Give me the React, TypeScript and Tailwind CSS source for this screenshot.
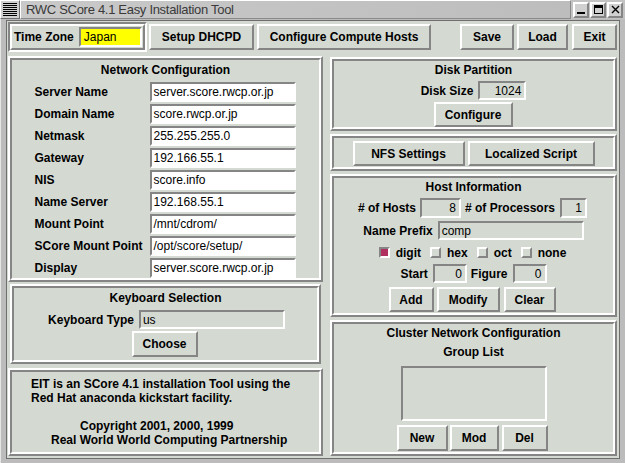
import React from 'react';

// Tk / Motif style bevels
const raised = 'border-2 border-t-white border-l-white border-r-[#858585] border-b-[#858585]';
const sunken = 'border-2 border-t-[#858585] border-l-[#858585] border-r-white border-b-white';

function Ridge({ className = '', inner = '', children }: { className?: string; inner?: string; children?: React.ReactNode }) {
  return (
    <div className={`${raised} ${className}`}>
      <div className={`h-full ${sunken} ${inner}`}>{children}</div>
    </div>
  );
}

function Btn({ className = '', children }: { className?: string; children: React.ReactNode }) {
  return (
    <button
      type="button"
      className={`${raised} bg-[#d4d9d2] flex items-center justify-center font-bold text-[12px] leading-none text-black shrink-0 ${className}`}
    >
      {children}
    </button>
  );
}

function Entry({ value, className = '', white = true, right = false }: { value: string; className?: string; white?: boolean; right?: boolean }) {
  return (
    <div
      className={`${sunken} ${white ? 'bg-white' : 'bg-[#d4d9d2]'} flex items-center px-[1px] text-[12px] leading-none text-black shrink-0 overflow-hidden ${right ? 'justify-end pr-[3px]' : ''} ${className}`}
    >
      {value}
    </div>
  );
}

function Check({ on, label }: { on?: boolean; label: string }) {
  return (
    <div className="flex items-center gap-[6px]">
      <div className={`w-[11px] h-[11px] ${on ? `${sunken} bg-[#b03060]` : `${raised} bg-[#d4d9d2]`}`} />
      <span className="font-bold text-[12px] leading-[14px]">{label}</span>
    </div>
  );
}

const networkRows = [
  ['Server Name', 'server.score.rwcp.or.jp'],
  ['Domain Name', 'score.rwcp.or.jp'],
  ['Netmask', '255.255.255.0'],
  ['Gateway', '192.166.55.1'],
  ['NIS', 'score.info'],
  ['Name Server', '192.168.55.1'],
  ['Mount Point', '/mnt/cdrom/'],
  ['SCore Mount Point', '/opt/score/setup/'],
  ['Display', 'server.score.rwcp.or.jp'],
];

function TitleBar() {
  return (
    <div className="h-[19px] flex bg-[#c3c3c3]">
      <div className={`w-[20px] h-[19px] border border-t-white border-l-white border-r-[#6e6e6e] border-b-[#6e6e6e] bg-[#d0d0d0] flex items-center justify-center`}>
        <svg width="14" height="13" viewBox="0 0 14 13">
          {[0, 2, 4, 6, 8, 10, 12].map((y) => (
            <rect key={y} x="0" y={y} width="14" height="1" fill="#000" />
          ))}
        </svg>
      </div>
      <div className="flex-1 border border-t-white border-l-white border-r-[#8a8a8a] border-b-[#8a8a8a] bg-gradient-to-r from-[#c9c9c9] to-[#bdbdbd] pl-[5px] text-[13px] leading-[17px] tracking-[-0.3px] text-[#3a3a3a]">
        RWC SCore 4.1 Easy Installation Tool
      </div>
      <div className="flex items-center gap-[1px] px-[2px] bg-[#c3c3c3]">
        <div className={`w-[16px] h-[16px] ${raised} bg-[#d0d0d0] flex items-end justify-center pb-[2px]`}>
          <div className="w-[8px] h-[2px] bg-black" />
        </div>
        <div className={`w-[16px] h-[16px] ${raised} bg-[#d0d0d0] flex items-center justify-center`}>
          <div className="w-[9px] h-[9px] border border-t-[3px] border-black" />
        </div>
        <div className={`w-[16px] h-[16px] ${raised} bg-[#d0d0d0] flex items-center justify-center`}>
          <svg width="9" height="9" viewBox="0 0 9 9">
            <path d="M1 1 L8 8 M8 1 L1 8" stroke="#000" strokeWidth="1.4" />
          </svg>
        </div>
      </div>
    </div>
  );
}

export default function App() {
  return (
    <div className="w-[625px] h-[463px] overflow-hidden bg-[#bcbcbc] flex flex-col font-['Liberation_Sans',Arial,sans-serif] text-black select-none">
      <TitleBar />
      <div className="flex-1 border-l border-l-[#e6e6e6] px-[5px] pt-[1px] pb-[4px] flex">
        <div className="flex-1 border border-[#6e6e6e] bg-[#d4d9d2] flex flex-col px-[1px] pt-[1px]">
          {/* toolbar */}
          <div className="flex items-center h-[30px]">
            <div className="w-[139px] h-[30px] border-2 border-t-[#858585] border-l-[#858585] border-r-white border-b-white shrink-0">
              <div className={`h-full ${raised} flex items-center pl-[2px] gap-[5px]`}>
                <span className="font-bold text-[12px]">Time Zone</span>
                <Entry value="Japan" className="w-[63px] h-[20px] !bg-[#ffff00] pl-[3px]" />
              </div>
            </div>
            <Btn className="w-[105px] h-[26px] ml-[2px]">Setup DHCPD</Btn>
            <Btn className="w-[174px] h-[26px] ml-[3px]">Configure Compute Hosts</Btn>
            <div className="flex-1" />
            <Btn className="w-[54px] h-[26px]">Save</Btn>
            <Btn className="w-[51px] h-[26px] ml-[3px]">Load</Btn>
            <Btn className="w-[45px] h-[26px] ml-[4px] mr-[1px]">Exit</Btn>
          </div>

          <div className="flex mt-[4px] gap-[7px] pr-[1px]">
            {/* left column */}
            <div className="w-[315px] flex flex-col">
              <Ridge className="h-[226px]" inner="pt-[3px] flex flex-col items-center">
                <div className="font-bold text-[12px] leading-[14px]">Network Configuration</div>
                <div className="mt-[5px] grid grid-cols-[115px_146px] gap-y-[2px] -ml-[1px]">
                  {networkRows.map(([label, value]) => (
                    <React.Fragment key={label}>
                      <div className="h-[20px] flex items-center font-bold text-[12px] whitespace-nowrap">{label}</div>
                      <Entry value={value} className="h-[20px] w-[146px] pl-[2px]" />
                    </React.Fragment>
                  ))}
                </div>
              </Ridge>

              <Ridge className="h-[80px] mt-[2px] mx-[2px]" inner="pt-[3px] flex flex-col items-center">
                <div className="font-bold text-[12px] leading-[14px]">Keyboard Selection</div>
                <div className="mt-[5px] flex items-center gap-[5px] ml-[2px]">
                  <span className="font-bold text-[12px]">Keyboard Type</span>
                  <Entry value="us" white={false} className="w-[146px] h-[19px] pl-[2px]" />
                </div>
                <Btn className="w-[66px] h-[26px] mt-[2px] -ml-[2px]">Choose</Btn>
              </Ridge>

              <Ridge className="h-[88px] mt-[4px]" inner="pt-[5px] pl-[19px]">
                <div className="font-bold text-[12px] leading-[14px] whitespace-pre">
                  <div>EIT is an SCore 4.1 installation Tool using the</div>
                  <div>Red Hat anaconda kickstart facility.</div>
                  <div className="h-[14px]" />
                  <div className="pl-[49px]">Copyright 2001, 2000, 1999</div>
                  <div className="pl-[20px]">Real World World Computing Partnership</div>
                </div>
              </Ridge>
            </div>

            {/* right column */}
            <div className="flex-1 flex flex-col mt-[1px]">
              <Ridge className="h-[74px]" inner="pt-[2px] flex flex-col items-center">
                <div className="font-bold text-[12px] leading-[14px]">Disk Partition</div>
                <div className="mt-[4px] flex items-center gap-[5px]">
                  <span className="font-bold text-[12px]">Disk Size</span>
                  <Entry value="1024" white={false} right className="w-[48px] h-[19px]" />
                </div>
                <Btn className="w-[79px] h-[25px] mt-[2px] -ml-[1px]">Configure</Btn>
              </Ridge>

              <Ridge className="h-[37px] mt-[3px]" inner="pt-[3px] flex justify-center gap-[3px]">
                <Btn className="w-[112px] h-[25px]">NFS Settings</Btn>
                <Btn className="w-[127px] h-[25px]">Localized Script</Btn>
              </Ridge>

              <Ridge className="h-[143px] mt-[3px]" inner="pt-[2px] flex flex-col items-center">
                <div className="font-bold text-[12px] leading-[14px]">Host Information</div>
                <div className="mt-[4px] flex items-center -ml-[2px]">
                  <span className="font-bold text-[12px]"># of Hosts</span>
                  <Entry value="8" white={false} right className="w-[41px] h-[20px] ml-[4px]" />
                  <span className="font-bold text-[12px] ml-[4px]"># of Processors</span>
                  <Entry value="1" white={false} right className="w-[27px] h-[20px] ml-[5px]" />
                </div>
                <div className="mt-[3px] flex items-center gap-[5px]">
                  <span className="font-bold text-[12px]">Name Prefix</span>
                  <Entry value="comp" white={false} className="w-[146px] h-[19px] pl-[2px]" />
                </div>
                <div className="mt-[5px] h-[15px] flex items-center gap-[9px] -ml-[2px]">
                  <Check on label="digit" />
                  <Check label="hex" />
                  <Check label="oct" />
                  <Check label="none" />
                </div>
                <div className="mt-[4px] flex items-center">
                  <span className="font-bold text-[12px]">Start</span>
                  <Entry value="0" white={false} right className="w-[34px] h-[19px] ml-[5px]" />
                  <span className="font-bold text-[12px] ml-[4px]">Figure</span>
                  <Entry value="0" white={false} right className="w-[34px] h-[19px] ml-[5px]" />
                </div>
                <div className="mt-[4px] flex items-center -ml-[3px]">
                  <Btn className="w-[45px] h-[25px]">Add</Btn>
                  <Btn className="w-[63px] h-[25px] ml-[3px]">Modify</Btn>
                  <Btn className="w-[52px] h-[25px] ml-[4px]">Clear</Btn>
                </div>
              </Ridge>

              <Ridge className="h-[136px] mt-[3px]" inner="pt-[2px] flex flex-col items-center">
                <div className="font-bold text-[12px] leading-[14px]">Cluster Network Configuration</div>
                <div className="mt-[5px] font-bold text-[12px] leading-[14px]">Group List</div>
                <div className={`mt-[7px] w-[146px] h-[55px] ${sunken} bg-[#d4d9d2]`} />
                <div className="mt-[4px] flex items-center -ml-[3px]">
                  <Btn className="w-[51px] h-[26px]">New</Btn>
                  <Btn className="w-[49px] h-[26px] ml-[2px]">Mod</Btn>
                  <Btn className="w-[46px] h-[26px] ml-[3px]">Del</Btn>
                </div>
              </Ridge>
            </div>
          </div>
        </div>
      </div>
    </div>
  );
}
